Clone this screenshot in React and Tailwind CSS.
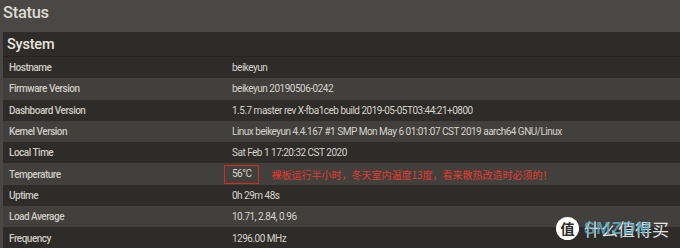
import React from 'react';

const rows = [
  ['Hostname', 'beikeyun'],
  ['Firmware Version', 'beikeyun 20190506-0242'],
  ['Dashboard Version', '1.5.7 master rev X-fba1ceb build 2019-05-05T03:44:21+0800'],
  ['Kernel Version', 'Linux beikeyun 4.4.167 #1 SMP Mon May 6 01:01:07 CST 2019 aarch64 GNU/Linux'],
  ['Local Time', 'Sat Feb 1 17:20:32 CST 2020'],
  ['Temperature', '56°C'],
  ['Uptime', '0h 29m 48s'],
  ['Load Average', '10.71, 2.84, 0.96'],
  ['Frequency', '1296.00 MHz'],
];

const Watermark = () => (
  <div className="absolute right-[4px] bottom-[8px] flex items-center gap-[5px]">
    <div className="flex h-[23px] w-[23px] items-center justify-center rounded-full bg-white text-[14px] font-bold text-[#2b2a27] [font-family:'Noto_Sans_CJK_SC',sans-serif]">
      值
    </div>
    <div className="relative h-[20px] w-[92px]">
      <span className="absolute left-0 top-0 text-[17px] leading-[20px] text-white/85 [font-family:'Noto_Sans_CJK_SC',sans-serif]">
        什么值得买
      </span>
      <span className="absolute left-0 top-0 text-[17px] font-bold leading-[20px] tracking-[1px] text-[#5fb3cf]/80 [font-family:'Liberation_Sans',sans-serif]">
        SMZDM
      </span>
    </div>
  </div>
);

const App = () => {
  return (
    <div className="relative h-[248px] w-[680px] overflow-hidden bg-[#4a4844] [font-family:Roboto,sans-serif]">
      <div className="h-[32px] px-[3px] pt-[1px] text-[16.5px] font-medium leading-[24px] tracking-[-0.3px] text-[#dcd9d2]">
        Status
      </div>
      <div className="ml-[3px] bg-[#2e2c29]">
        <div className="h-[25px] border-b border-[#252320] px-[4px] pt-[3px] text-[14.5px] font-medium leading-[20px] tracking-[-0.2px] text-[#e8e5de]">
          System
        </div>
        <table className="w-full border-collapse text-[10px] tracking-[-0.5px] text-[#d6d3cb]">
          <tbody>
            {rows.map(([label, value], idx) => (
              <tr key={label} className={idx % 2 === 1 ? 'h-[21.3px] bg-[#42403c]' : 'h-[21.3px] bg-[#2e2c29]'}>
                <td className="w-[223px] pl-[6px] align-middle font-medium text-[#cdcac2]">{label}</td>
                <td className="pl-[6px] align-middle whitespace-nowrap">
                  {label === 'Temperature' ? (
                    <div className="flex items-center">
                      <span className="-ml-[8px] inline-block border-[1.5px] border-[#d42a20] px-[7px] py-[1.5px] leading-[14px]">
                        {value}
                      </span>
                      <span className="ml-[12px] text-[10px] tracking-normal text-[#e23b2e] [font-family:'Noto_Sans_CJK_SC',sans-serif]">
                        裸板运行半小时，冬天室内温度13度，看来散热改造时必须的！
                      </span>
                    </div>
                  ) : (
                    value
                  )}
                </td>
              </tr>
            ))}
          </tbody>
        </table>
      </div>
      <Watermark />
    </div>
  );
};

export default App;
